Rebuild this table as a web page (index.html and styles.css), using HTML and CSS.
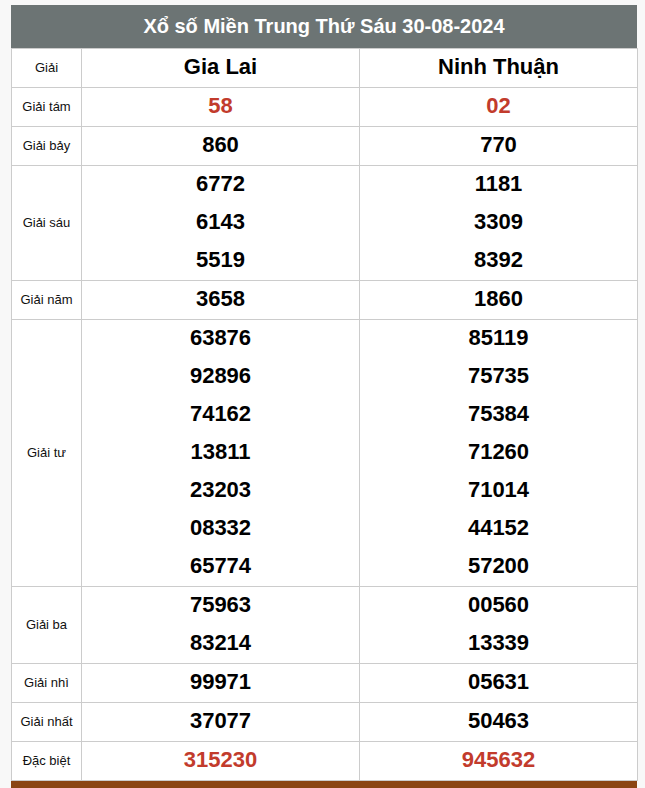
FILE: index.html
```html
<!DOCTYPE html>
<html lang="vi">
<head>
<meta charset="utf-8">
<title>Xổ số Miền Trung</title>
<link rel="stylesheet" href="styles.css">
</head>
<body>
<div class="wrap">
  <div class="title">Xổ số Miền Trung Thứ Sáu 30-08-2024</div>
  <table class="kq">
    <colgroup><col class="c-label"><col class="c-prov"><col class="c-prov"></colgroup>
    <tr class="head">
      <td class="label">Giải</td>
      <td class="prov">Gia Lai</td>
      <td class="prov">Ninh Thuận</td>
    </tr>
    <tr>
      <td class="label">Giải tám</td>
      <td><div class="num red">58</div></td>
      <td><div class="num red">02</div></td>
    </tr>
    <tr>
      <td class="label">Giải bảy</td>
      <td><div class="num">860</div></td>
      <td><div class="num">770</div></td>
    </tr>
    <tr>
      <td class="label">Giải sáu</td>
      <td><div class="num">6772</div><div class="num">6143</div><div class="num">5519</div></td>
      <td><div class="num">1181</div><div class="num">3309</div><div class="num">8392</div></td>
    </tr>
    <tr>
      <td class="label">Giải năm</td>
      <td><div class="num">3658</div></td>
      <td><div class="num">1860</div></td>
    </tr>
    <tr>
      <td class="label">Giải tư</td>
      <td><div class="num">63876</div><div class="num">92896</div><div class="num">74162</div><div class="num">13811</div><div class="num">23203</div><div class="num">08332</div><div class="num">65774</div></td>
      <td><div class="num">85119</div><div class="num">75735</div><div class="num">75384</div><div class="num">71260</div><div class="num">71014</div><div class="num">44152</div><div class="num">57200</div></td>
    </tr>
    <tr>
      <td class="label">Giải ba</td>
      <td><div class="num">75963</div><div class="num">83214</div></td>
      <td><div class="num">00560</div><div class="num">13339</div></td>
    </tr>
    <tr>
      <td class="label">Giải nhì</td>
      <td><div class="num">99971</div></td>
      <td><div class="num">05631</div></td>
    </tr>
    <tr>
      <td class="label">Giải nhất</td>
      <td><div class="num">37077</div></td>
      <td><div class="num">50463</div></td>
    </tr>
    <tr>
      <td class="label">Đặc biệt</td>
      <td><div class="num red">315230</div></td>
      <td><div class="num red">945632</div></td>
    </tr>
  </table>
  <div class="foot"></div>
</div>
</body>
</html>
```
FILE: styles.css
```css
html, body {
  margin: 0;
  padding: 0;
  background: #f8f8f8;
  font-family: "Liberation Sans", Arial, sans-serif;
  color: #000;
}
.wrap {
  width: 626px;
  margin: 5px 0 0 11px;
}
.title {
  height: 43px;
  line-height: 43px;
  background: #6c7474;
  color: #fff;
  font-size: 20px;
  font-weight: bold;
  text-align: center;
}
.kq {
  width: 626px;
  border-collapse: collapse;
  table-layout: fixed;
  background: #fff;
}
.c-label { width: 70px; }
.c-prov { width: 278px; }
.kq td {
  border: 1px solid #cccccc;
  padding: 0 0 2px;
  text-align: center;
  vertical-align: middle;
}
.head td { height: 36px; }
.label {
  font-size: 13px;
  color: #111;
}
.prov {
  font-size: 22px;
  font-weight: bold;
}
.kq td.cell { padding: 0; }
.num {
  height: 36px;
  line-height: 36px;
  font-size: 22px;
  font-weight: bold;
}
.num + .num { margin-top: 2px; }
.red { color: #c23b2c; }
.foot {
  height: 10px;
  background: #8b4513;
}
```
